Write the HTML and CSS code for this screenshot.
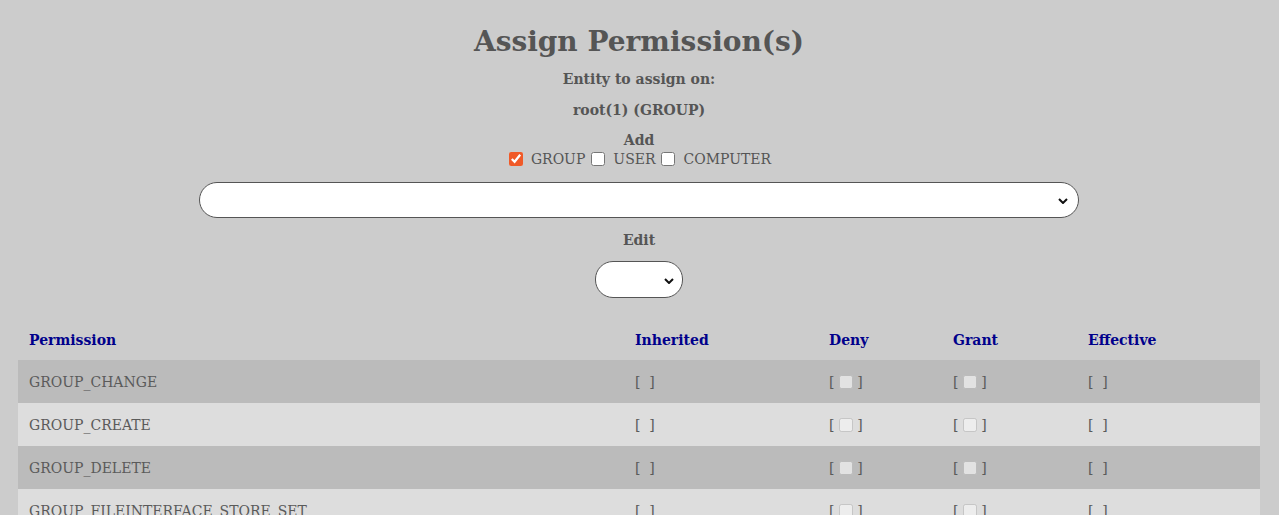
FILE: index.html
```html
<!DOCTYPE html>
<html>
<head>
<meta charset="utf-8">
<link rel="stylesheet" href="styles.css">
</head>
<body>
<div class="page">
  <h1 class="title">Assign Permission(s)</h1>
  <p class="label">Entity to assign on:</p>
  <p class="label">root(1) (GROUP)</p>
  <div class="add">
    <div class="label add-label">Add</div>
    <div class="types">
      <input type="checkbox" checked><span class="type">GROUP</span>
      <input type="checkbox"><span class="type">USER</span>
      <input type="checkbox"><span class="type">COMPUTER</span>
    </div>
  </div>
  <div class="sel-row">
    <span class="sel-wrap">
      <select class="wide"><option></option></select>
      <svg class="chev chev-wide" width="10" height="6" viewBox="0 0 10 6"><path d="M1 1 L5 5 L9 1" fill="none" stroke="#111" stroke-width="2"/></svg>
    </span>
  </div>
  <div class="label edit-label">Edit</div>
  <div class="sel-row edit-sel">
    <span class="sel-wrap">
      <select class="small"><option></option></select>
      <svg class="chev chev-small" width="10" height="6" viewBox="0 0 10 6"><path d="M1 1 L5 5 L9 1" fill="none" stroke="#111" stroke-width="2"/></svg>
    </span>
  </div>
  <table class="perms">
    <thead>
      <tr><th class="c1">Permission</th><th class="c2">Inherited</th><th class="c3">Deny</th><th class="c4">Grant</th><th class="c5">Effective</th></tr>
    </thead>
    <tbody>
      <tr class="odd"><td>GROUP_CHANGE</td><td>[&nbsp;&nbsp;]</td><td>[ <input type="checkbox" disabled> ]</td><td>[ <input type="checkbox" disabled> ]</td><td>[&nbsp;&nbsp;]</td></tr>
      <tr class="even"><td>GROUP_CREATE</td><td>[&nbsp;&nbsp;]</td><td>[ <input type="checkbox" disabled> ]</td><td>[ <input type="checkbox" disabled> ]</td><td>[&nbsp;&nbsp;]</td></tr>
      <tr class="odd"><td>GROUP_DELETE</td><td>[&nbsp;&nbsp;]</td><td>[ <input type="checkbox" disabled> ]</td><td>[ <input type="checkbox" disabled> ]</td><td>[&nbsp;&nbsp;]</td></tr>
      <tr class="even"><td>GROUP_FILEINTERFACE_STORE_SET</td><td>[&nbsp;&nbsp;]</td><td>[ <input type="checkbox" disabled> ]</td><td>[ <input type="checkbox" disabled> ]</td><td>[&nbsp;&nbsp;]</td></tr>
    </tbody>
  </table>
</div>
</body>
</html>
```
FILE: styles.css
```css
html, body {
  margin: 0;
  padding: 0;
  background: #cccccc;
}
body {
  font-family: "DejaVu Serif", serif;
  color: #555555;
  font-size: 14px;
}
.page {
  padding: 0 19px 0 18px;
  text-align: center;
}
.title {
  margin: 0;
  padding-top: 23px;
  font-size: 28px;
  line-height: 38px;
  font-weight: bold;
}
.label {
  margin: 0;
  font-weight: bold;
  line-height: 20px;
}
p.label {
  margin-top: 11px;
}
p.label:first-of-type {
  margin-top: 8px;
}
.add {
  margin-top: 10px;
}
.types {
  display: flex;
  justify-content: center;
  align-items: center;
  line-height: 18px;
  margin-left: 8px;
}
.types input {
  margin: 0 8px 0 0;
  width: 14px;
  height: 14px;
  accent-color: #f05a28;
}
.type {
  margin-right: 6px;
}
.sel-row {
  display: flex;
  justify-content: center;
  margin-top: 14px;
}
.sel-row.edit-sel {
  margin-top: 11px;
}
.sel-wrap {
  position: relative;
  display: block;
}
select {
  appearance: none;
  -webkit-appearance: none;
  display: block;
  box-sizing: border-box;
  background: #ffffff;
  border: 1px solid #555555;
  border-radius: 18px;
  height: 36px;
  margin: 0;
  font-family: "DejaVu Serif", serif;
}
.wide { width: 880px; }
.small { width: 88px; height: 37px; }
.chev {
  position: absolute;
  top: 50%;
  margin-top: -2px;
  pointer-events: none;
}
.chev-wide { right: 11px; }
.chev-small { right: 9px; }
.edit-label { margin-top: 12px; }
.perms {
  margin-top: 22px;
  width: 100%;
  border-collapse: collapse;
  text-align: left;
}
.perms th {
  color: #00008b;
  font-weight: bold;
  height: 40px;
  padding: 0 11px;
}
.perms td {
  height: 43px;
  padding: 0 11px;
  color: #5a5a5a;
}
.c1 { width: 584px; }
.c2 { width: 172px; }
.c3 { width: 102px; }
.c4 { width: 113px; }
.odd { background: #bbbbbb; }
.even { background: #dddddd; }
.perms input {
  margin: 0;
  width: 14px;
  height: 14px;
  vertical-align: -2px;
}
```
